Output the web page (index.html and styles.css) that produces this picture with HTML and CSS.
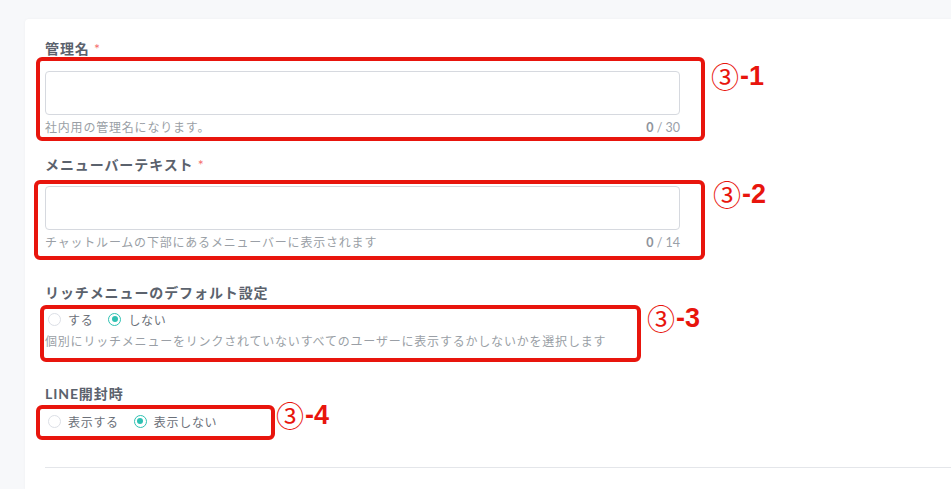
FILE: index.html
```html
<!DOCTYPE html>
<html lang="ja">
<head>
<meta charset="utf-8">
<link rel="stylesheet" href="styles.css">
</head>
<body>
<div class="page">
  <div class="card">
    <div class="item item-1">
      <div class="label">管理名 <span class="req">*</span></div>
      <div class="input"></div>
      <div class="help-row">
        <span class="help">社内用の管理名になります。</span>
        <span class="count"><b>0</b> / 30</span>
      </div>
    </div>
    <div class="item item-2">
      <div class="label">メニューバーテキスト <span class="req">*</span></div>
      <div class="input"></div>
      <div class="help-row">
        <span class="help">チャットルームの下部にあるメニューバーに表示されます</span>
        <span class="count"><b>0</b> / 14</span>
      </div>
    </div>
    <div class="item item-3">
      <div class="label">リッチメニューのデフォルト設定</div>
      <div class="radios">
        <span class="radio"><span class="dot"></span>する</span>
        <span class="radio on"><span class="dot"></span>しない</span>
      </div>
      <div class="help-row">
        <span class="help">個別にリッチメニューをリンクされていないすべてのユーザーに表示するかしないかを選択します</span>
      </div>
    </div>
    <div class="item item-4">
      <div class="label">LINE開封時</div>
      <div class="radios">
        <span class="radio"><span class="dot"></span>表示する</span>
        <span class="radio on"><span class="dot"></span>表示しない</span>
      </div>
    </div>
    <div class="divider"></div>
  </div>

  <div class="mark box-1"></div>
  <div class="mark box-2"></div>
  <div class="mark box-3"></div>
  <div class="mark box-4"></div>
  <div class="tag tag-1"><span class="circ">③</span>-1</div>
  <div class="tag tag-2"><span class="circ">③</span>-2</div>
  <div class="tag tag-3"><span class="circ">③</span>-3</div>
  <div class="tag tag-4"><span class="circ">③</span>-4</div>
</div>
</body>
</html>
```

FILE: styles.css
```css
html, body {
  margin: 0;
  padding: 0;
  background: #f7f8fa;
  overflow: hidden;
  height: 489px;
}
.page {
  position: relative;
  height: 489px;
  box-sizing: border-box;
  padding: 19px 0 0 25px;
  font-family: "Lato", "Noto Sans CJK JP", sans-serif;
}
.card {
  height: 470px;
  background: #fff;
  border-radius: 4px 0 0 0;
  box-shadow: 0 0 3px rgba(0,0,0,0.04);
  padding: 20px 0 0 20px;
  box-sizing: border-box;
}
.label {
  font-size: 14px;
  line-height: 20px;
  font-weight: bold;
  color: #5b626d;
  letter-spacing: 0.9px;
}
.req {
  color: #f56c6c;
  font-weight: normal;
  letter-spacing: 0;
}
.input {
  margin-top: 12px;
  width: 635px;
  height: 44px;
  box-sizing: border-box;
  border: 1px solid #d6d9df;
  border-radius: 4px;
}
.help-row {
  width: 635px;
  display: flex;
  justify-content: space-between;
  margin-top: 3px;
  line-height: 20px;
}
.help {
  font-size: 12px;
  color: #9a9fa6;
  letter-spacing: 0.8px;
  white-space: nowrap;
}
.count {
  font-size: 12.5px;
  color: #9aa0a8;
}
.count b {
  font-weight: bold;
  color: #8e939b;
}
.item-1 { margin-bottom: 17px; }
.item-2 { margin-bottom: 30px; }
.item-3 { margin-bottom: 32px; }
.item-2 .input { margin-top: 11px; }
.radios {
  margin-top: 6px;
  height: 20px;
  display: flex;
  align-items: center;
  gap: 15px;
  padding-left: 3px;
}
.item-4 .radios { margin-top: 7px; }
.radio {
  display: inline-flex;
  align-items: center;
  gap: 7px;
  font-size: 12px;
  letter-spacing: 0.7px;
  color: #6b7079;
}
.dot {
  width: 13px;
  height: 13px;
  box-sizing: border-box;
  border: 1px solid #dcdfe6;
  border-radius: 50%;
  position: relative;
}
.radio.on .dot {
  border-color: #2ec1b2;
}
.radio.on .dot::after {
  content: "";
  position: absolute;
  left: 2.5px;
  top: 2.5px;
  width: 6px;
  height: 6px;
  border-radius: 50%;
  background: #2ec1b2;
}
.divider {
  margin-top: 36px;
  height: 1px;
  background: #e4e6ea;
}
.mark {
  position: absolute;
  border: 4px solid #e8150d;
  border-radius: 6px;
  box-sizing: border-box;
}
.box-1 { left: 36px; top: 57px; width: 669px; height: 84px; }
.box-2 { left: 34px; top: 180px; width: 671px; height: 80px; }
.box-3 { left: 40px; top: 305px; width: 601px; height: 57px; }
.box-4 { left: 36px; top: 405px; width: 239px; height: 35px; }
.tag {
  position: absolute;
  color: #e8150d;
  font-family: "Liberation Sans", Arial, sans-serif;
  font-weight: bold;
  font-size: 27px;
  line-height: 30px;
  display: flex;
  align-items: center;
}
.circ {
  font-family: "Noto Sans CJK JP", sans-serif;
  font-weight: normal;
  font-size: 28px;
  margin-right: 1px;
}
.tag-1 { left: 711px; top: 61px; }
.tag-2 { left: 713px; top: 179px; }
.tag-3 { left: 647px; top: 303px; }
.tag-4 { left: 276px; top: 400px; }
```
